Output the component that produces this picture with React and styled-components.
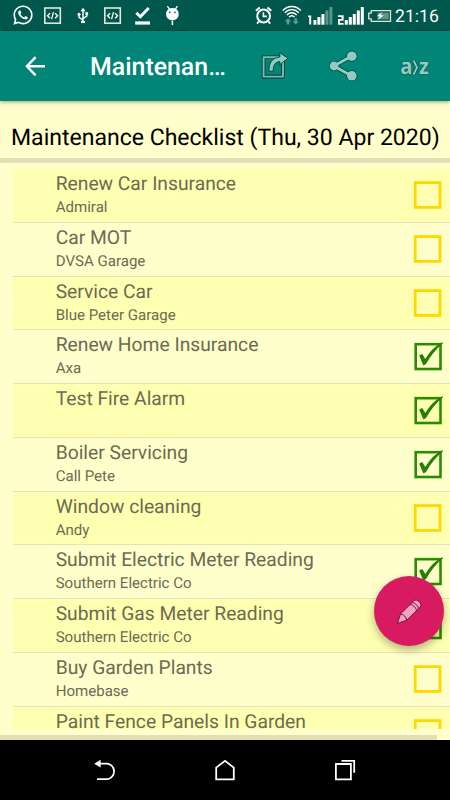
import React from 'react'
import styled, { createGlobalStyle } from 'styled-components'
import { FaWhatsapp } from 'react-icons/fa'

const GlobalStyle = createGlobalStyle`
  * {
    box-sizing: border-box;
  }
  body {
    margin: 0;
    font-family: Roboto, 'Liberation Sans', sans-serif;
    text-rendering: geometricPrecision;
  }
`

const Screen = styled.div`
  position: relative;
  width: 450px;
  height: 800px;
  display: flex;
  flex-direction: column;
  overflow: hidden;
  background: #ffffcc;
`

const StatusBar = styled.div`
  flex: none;
  height: 31px;
  display: flex;
  align-items: flex-start;
  padding: 4px 0 0 12px;
  background: #00574b;
  color: #fff;
`

const Slot = styled.div`
  flex: none;
  width: ${({ $width }) => $width}px;
  height: 24px;

  svg {
    display: block;
  }
`

const Clock = styled.div`
  font-size: 17.6px;
  line-height: 26px;
`

const AppBar = styled.header`
  flex: none;
  height: 70px;
  display: flex;
  align-items: center;
  padding: 0 20px 0 25px;
  background: #008577;
  box-shadow: 0 1px 4px rgba(0, 0, 0, 0.4);
  z-index: 1;
`

const BarTitle = styled.h1`
  width: 137px;
  margin: 4px 0 0 44px;
  white-space: nowrap;
  font-size: 24.9px;
  font-weight: 500;
  line-height: 34px;
  color: #fff;
`

const Actions = styled.div`
  flex: 1;
  display: flex;
  align-items: center;
  justify-content: space-between;
  margin-left: 33px;
`

const SortLabel = styled.span`
  width: 31px;
  display: flex;
  align-items: center;
  justify-content: center;
  font-family: 'Open Sans', sans-serif;
  font-size: 22px;
  font-weight: 700;
  line-height: 22px;
  color: #93cbc4;
  text-shadow: 0 0 1px #003f38, 0 0 1px #003f38;
  transform: scaleX(0.92);

  svg {
    flex: none;
    margin-top: 3px;
  }
`

const Heading = styled.h2`
  flex: none;
  height: 62px;
  margin: 0;
  padding: 21px 0 0 11px;
  border-bottom: 5px solid #e2dfb4;
  font-size: 23.04px;
  font-weight: 400;
  line-height: 32px;
  white-space: nowrap;
  color: #000;
`

const List = styled.ul`
  flex: 1;
  min-height: 0;
  margin: 6px 0 6.5px 13px;
  padding: 0;
  overflow: hidden;
  list-style: none;
`

const Row = styled.li`
  height: 53.75px;
  display: flex;
  justify-content: space-between;
  padding: 1px 5px 0 42.7px;
  border-bottom: 1px solid #e6e3bb;
  background: ${({ $shaded }) => ($shaded ? '#ffffb2' : '#ffffcc')};
`

const Task = styled.div`
  font-size: 19.25px;
  line-height: 27px;
  color: #6b6b52;
`

const Supplier = styled.div`
  font-size: 15.05px;
  line-height: 20px;
  color: #6b6b52;
`

const CheckSvg = styled.svg`
  flex: none;
  margin-top: 9px;
`

const Scrollbar = styled.div`
  flex: none;
  width: 437px;
  height: 5px;
  background: #e2dfb4;
`

const NavBar = styled.nav`
  flex: none;
  height: 60px;
  display: flex;
  justify-content: space-between;
  align-items: center;
  padding: 0 94px;
  background: #000;
`

const Fab = styled.button`
  position: absolute;
  right: 6px;
  bottom: 154px;
  width: 70px;
  height: 70px;
  display: flex;
  align-items: center;
  justify-content: center;
  padding: 0;
  border: 0;
  border-radius: 50%;
  background: #d81b60;
  box-shadow: 0 4px 8px rgba(0, 0, 0, 0.3);
`

const tasks = [
  { name: 'Renew Car Insurance', supplier: 'Admiral' },
  { name: 'Car MOT', supplier: 'DVSA Garage' },
  { name: 'Service Car', supplier: 'Blue Peter Garage' },
  { name: 'Renew Home Insurance', supplier: 'Axa', done: true },
  { name: 'Test Fire Alarm', supplier: '', done: true },
  { name: 'Boiler Servicing', supplier: 'Call Pete', done: true },
  { name: 'Window cleaning', supplier: 'Andy' },
  { name: 'Submit Electric Meter Reading', supplier: 'Southern Electric Co', done: true },
  { name: 'Submit Gas Meter Reading', supplier: 'Southern Electric Co', done: true },
  { name: 'Buy Garden Plants', supplier: 'Homebase' },
  { name: 'Paint Fence Panels In Garden', supplier: '' },
]

const CodeIcon = () => (
  <svg width="18" height="24" fill="none" stroke="#fff">
    <rect x="0.8" y="4" width="15.5" height="15.2" stroke="#e4e6dc" strokeWidth="1.6" />
    <path d="M6 9.2 3.5 11.7l2.5 2.5M11.1 9.2l2.5 2.5-2.5 2.5M9.5 8.2 7.6 15.2" strokeWidth="1.3" />
  </svg>
)

const UsbIcon = () => (
  <svg width="13" height="24" fill="none" stroke="#f2f5f3" strokeWidth="1.5">
    <path d="M6 18V5M6 16.2 2 13.3V11M6 14.5l3.8-2.3V10" />
    <path d="m3.5 7.2 2.5-3.4 2.5 3.4z" fill="#fff" stroke="none" />
    <circle cx="2" cy="10.2" r="1.5" fill="#fff" stroke="none" />
    <rect x="8.3" y="8.2" width="2.8" height="2.8" fill="#fff" stroke="none" />
    <path d="M4 18h4" strokeWidth="2.2" />
  </svg>
)

const DoneIcon = () => (
  <svg width="16" height="24" fill="none" stroke="#fff">
    <path d="m1.3 8.8 4.1 4L13.7 4" strokeWidth="2.9" />
    <path d="M.2 19H15" strokeWidth="3.2" />
  </svg>
)

const AndroidIcon = () => (
  <svg width="15" height="24">
    <path d="M.2 8.6C.8 5.7 3.3 4 6.4 4s5.6 1.7 6.2 4.6v2.1c0 3.1-2.6 5.5-6.2 5.5S.2 13.8.2 10.7z" fill="#fff" />
    <path d="m1.4 2.2 2 3M11.4 2.2l-2 3" stroke="#fff" strokeWidth="1.3" />
    <path d="M6.4 16.5V21" stroke="#fff" strokeWidth="1.5" />
    <circle cx="3.8" cy="8.4" r=".8" fill="#00574b" />
    <circle cx="9" cy="8.4" r=".8" fill="#00574b" />
  </svg>
)

const AlarmIcon = () => (
  <svg width="18" height="24" fill="none" stroke="#fff">
    <circle cx="8.6" cy="12" r="6.4" strokeWidth="2" />
    <path d="M8.4 8.2v4.2h3.4" strokeWidth="1.6" />
    <path d="M.9 6.8 4.7 3.5M12.5 3.5l3.8 3.3" strokeWidth="2" />
    <path d="m4 17.4-2 2.3M13.2 17.4l2 2.3" strokeWidth="1.8" />
  </svg>
)

const WifiIcon = () => (
  <svg width="20" height="24" fill="none" stroke="#fff" strokeWidth="1.4">
    <path d="M.7 6.6c5.2-5.4 13-5.4 18.2 0M2.8 8.8c4-4.2 10-4.2 14 0M4.9 11c2.8-3 7-3 9.8 0M7 13.1c1.6-1.8 4-1.8 5.6 0" />
    <path d="M6 14.2 2.8 17.6h2v3h2.4v-3h2zM13.7 20.6l3.2-3.4h-2v-3h-2.4v3h-2z" fill="#5f9c91" stroke="none" />
  </svg>
)

const SignalIcon = ({ sim, strength }) => (
  <svg width="26" height="24" fill="#fff">
    {sim === 1 ? (
      <path d="M0 11.5V13h1.2v7.5h2v-9z" />
    ) : (
      <path d="M0 11.3v1.8h3.6v1.8H0v5.8h5.6v-1.8H1.9v-2.2h3.7v-5.4z" />
    )}
    {[16, 13, 10, 6.5, 3].map((top, i) => (
      <rect
        key={top}
        x={(sim === 1 ? 5.4 : 6.8) + i * 4}
        y={top}
        width="3"
        height={20.7 - top}
        fill={i < strength ? '#fff' : '#5b958a'}
      />
    ))}
  </svg>
)

const BatteryIcon = () => (
  <svg width="25" height="24">
    <path d="M3.2 6.7h19.3v10.6H3.2v-2.5H.7V9.2h2.5z" fill="none" stroke="#e3e5d5" strokeWidth="1.3" />
    <path d="M9.6 8.6h11.2v6.8H9.6z" fill="#5b958a" />
    <path d="m14.2 8-5.4 4.3h3.1L9.4 16l6.5-4.7h-3.3z" fill="#fff" />
  </svg>
)

const BackArrow = () => (
  <svg width="21" height="22" fill="none" stroke="#fff" strokeWidth="2.4">
    <path d="M20 11.3H2.5M10.6 2.1 1.9 11.3l8.7 9" />
  </svg>
)

const ExportIcon = () => (
  <svg width="29" height="28">
    <path d="M3.6 5.2h19.4v19.4H3.6z" fill="none" stroke="#003f38" strokeWidth="3.6" />
    <path d="M3.6 5.2h19.4v19.4H3.6z" fill="none" stroke="#80bab2" strokeWidth="1.9" />
    <path
      d="M9 19.2C8.8 10.5 12.2 5.8 19.8 5V.8L28 6.2l-8.2 6.5V9.5c-4.8.5-6.7 3.9-6.6 9.7z"
      fill="#93cbc4"
      stroke="#004a42"
      strokeWidth="1"
    />
  </svg>
)

const ShareIcon = () => (
  <svg width="30" height="32">
    <g fill="#004a42" stroke="#004a42">
      <path d="m22.8 6-18 10 18 10" fill="none" strokeWidth="4.4" />
      <circle cx="22.8" cy="6.2" r="5.1" />
      <circle cx="5" cy="16" r="4.6" />
      <circle cx="22.8" cy="25.8" r="5.1" />
    </g>
    <g fill="#93cbc4">
      <path d="m22.8 6-18 10 18 10" fill="none" stroke="#93cbc4" strokeWidth="2.8" />
      <circle cx="22.8" cy="6.2" r="4.8" />
      <circle cx="5" cy="16" r="4.4" />
      <circle cx="22.8" cy="25.8" r="4.8" />
    </g>
  </svg>
)

const Chevron = () => (
  <svg width="7" height="17" fill="none">
    <path d="M1.5 1.5 5.2 8.5 1.5 15.5" stroke="#004a42" strokeWidth="3.4" />
    <path d="M1.5 1.5 5.2 8.5 1.5 15.5" stroke="#93cbc4" strokeWidth="2" />
  </svg>
)

const Checkbox = ({ done }) => (
  <CheckSvg width="32" height="34">
    {done ? (
      <g transform="translate(0.5 0.6)">
        <rect x="2.2" y="3.6" width="24.8" height="24.8" fill="none" stroke="#2e8b00" strokeWidth="2.6" />
        <path
          d="m5.6 15 3.2-1.6 3 5C16 11.2 21.6 5.2 29 1.6l.7.8C23 8.3 17 15 12.5 23.4l-2.6 1.4z"
          fill="#268000"
        />
      </g>
    ) : (
      <rect x="2.2" y="3.6" width="24.8" height="24.8" fill="none" stroke="#ffd800" strokeWidth="2.8" />
    )}
  </CheckSvg>
)

const PencilIcon = () => (
  <svg width="27" height="27" fill="#eea3c1" stroke="#7a123b" strokeWidth="1">
    <path d="M1.3 25.5 4.5 16 17.8 2.7c2.9-2.8 9.3 3.3 6.3 6.5L10.7 22.3z" />
    <path d="M4.5 16c3 .2 6 3.1 6.2 6.3M14 6.4c3.2.3 6.1 3.1 6.5 6.3M16 4.5c3.2.3 6.1 3.1 6.5 6.3" fill="none" />
  </svg>
)

const App = () => (
  <Screen>
    <GlobalStyle />
    <StatusBar>
      <Slot $width={32}><FaWhatsapp size={22} /></Slot>
      <Slot $width={33}><CodeIcon /></Slot>
      <Slot $width={27}><UsbIcon /></Slot>
      <Slot $width={31}><CodeIcon /></Slot>
      <Slot $width={31}><DoneIcon /></Slot>
      <Slot $width={89}><AndroidIcon /></Slot>
      <Slot $width={27}><AlarmIcon /></Slot>
      <Slot $width={26}><WifiIcon /></Slot>
      <Slot $width={30}><SignalIcon sim={1} strength={3} /></Slot>
      <Slot $width={30}><SignalIcon sim={2} strength={5} /></Slot>
      <Slot $width={27}><BatteryIcon /></Slot>
      <Clock>21:16</Clock>
    </StatusBar>
    <AppBar>
      <BackArrow />
      <BarTitle>Maintenan…</BarTitle>
      <Actions>
        <ExportIcon />
        <ShareIcon />
        <SortLabel>a<Chevron />z</SortLabel>
      </Actions>
    </AppBar>
    <Heading>Maintenance Checklist (Thu, 30 Apr 2020)</Heading>
    <List>
      {tasks.map((task, i) => (
        <Row key={task.name} $shaded={i % 2 === 0}>
          <div>
            <Task>{task.name}</Task>
            <Supplier>{task.supplier}</Supplier>
          </div>
          <Checkbox done={task.done} />
        </Row>
      ))}
    </List>
    <Scrollbar />
    <NavBar>
      <svg width="22" height="22" fill="none" stroke="#fff" strokeWidth="1.7">
        <path d="M3 20.2h9.5c3.5 0 7.6-3 7.6-8S16 4.7 12.5 4.7H4" />
        <path d="M.2 4.7 6.6.8v7.6z" fill="#fff" stroke="none" />
      </svg>
      <svg width="20" height="22" fill="none" stroke="#fff" strokeWidth="1.8">
        <path d="M1.2 20.3V8.6L10 1.8l8.8 6.8v11.7z" />
      </svg>
      <svg width="22" height="22" fill="none" stroke="#fff" strokeWidth="1.8">
        <path d="M1.9 5h15v15.3h-15zM7.5 1.8h12.7v12" />
      </svg>
    </NavBar>
    <Fab>
      <PencilIcon />
    </Fab>
  </Screen>
)

export default App
